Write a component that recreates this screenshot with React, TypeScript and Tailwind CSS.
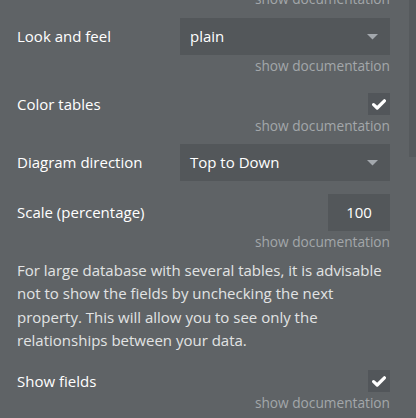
import React from "react";

const font = { fontFamily: '"Open Sans", "Noto Sans", sans-serif' };

function Doc() {
  return (
    <div className="text-right text-[13.7px] leading-[20px] text-[#a3a7aa]">show documentation</div>
  );
}

function Caret() {
  return (
    <svg width="11" height="6" viewBox="0 0 11 6" className="shrink-0">
      <polygon points="0,0 11,0 5.5,5.5" fill="#a3a8ad" />
    </svg>
  );
}

function Dropdown({ value }: { value: string }) {
  return (
    <div className="flex h-[37px] w-[210px] items-center justify-between bg-[#53575a] pl-[10px] pr-[12px] text-[15px] text-white">
      <span>{value}</span>
      <Caret />
    </div>
  );
}

function Check() {
  return (
    <div className="flex h-[22px] w-[22px] items-center justify-center bg-[#52565a]">
      <svg width="14" height="11" viewBox="0 0 14 11">
        <polyline
          points="1.6,5.6 5.2,9 12.4,1.8"
          fill="none"
          stroke="#ffffff"
          strokeWidth="3.2"
          strokeLinecap="round"
          strokeLinejoin="round"
        />
      </svg>
    </div>
  );
}

export default function App() {
  return (
    <div className="relative h-[418px] w-[416px] overflow-hidden bg-[#5f6366]" style={font}>
      <div className="absolute right-0 top-0 h-[157px] w-[7px] bg-[#565a5d]" />
      <div className="flex flex-col pl-[17px] pr-[26px] -mt-[11px]">
        <Doc />
        <div className="mt-[9px] flex items-center justify-between">
          <span className="text-[15px] text-white">Look and feel</span>
          <Dropdown value="plain" />
        </div>
        <div className="mt-[1px]">
          <Doc />
        </div>
        <div className="mt-[17px] flex h-[22px] items-center justify-between">
          <span className="text-[15px] text-white">Color tables</span>
          <Check />
        </div>
        <div className="mt-[1px]">
          <Doc />
        </div>
        <div className="mt-[8px] flex items-center justify-between">
          <span className="text-[15px] text-white">Diagram direction</span>
          <Dropdown value="Top to Down" />
        </div>
        <div className="mt-[13px] flex items-center justify-between">
          <span className="text-[15px] text-white">Scale (percentage)</span>
          <div className="flex h-[37px] w-[62px] items-center justify-center bg-[#53575a] text-[15px] text-white">
            100
          </div>
        </div>
        <div className="mt-[1px]">
          <Doc />
        </div>
        <p className="mt-[7px] text-[15px] leading-[23.3px] text-[#e2e3e4]">
          For large database with several tables, it is advisable not to show the fields by unchecking the next
          property. This will allow you to see only the relationships between your data.
        </p>
        <div className="mt-[18px] flex h-[22px] items-center justify-between">
          <span className="text-[15px] text-white">Show fields</span>
          <Check />
        </div>
        <div className="mt-[1px]">
          <Doc />
        </div>
      </div>
    </div>
  );
}
